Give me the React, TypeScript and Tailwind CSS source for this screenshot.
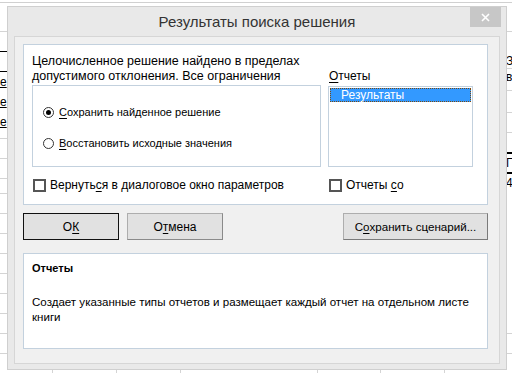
import React from "react";

const U = ({ children }: { children: React.ReactNode }) => (
  <span className="underline underline-offset-[2px] decoration-[1px]">{children}</span>
);

export default function App() {
  const leftLines = [31, 138, 158, 178, 193, 213, 233, 253, 273, 293, 313, 333, 353];
  const rightLines = [31, 68, 90, 112, 132, 333, 353];
  return (
    <div
      className="relative w-[512px] h-[373px] bg-white overflow-hidden text-[#000] whitespace-nowrap"
      style={{ fontFamily: '"Liberation Sans", Arial, sans-serif' }}
    >
      {/* spreadsheet behind */}
      <div className="absolute left-0 top-[2px] w-[512px] h-px bg-[#d0d0d0]" />
      {leftLines.map((y) => (
        <div key={"l" + y} className="absolute left-0 w-[8px] h-px bg-[#d4d4d4]" style={{ top: y }} />
      ))}
      <div className="absolute left-0 top-[51px] w-[8px] h-px bg-black" />
      <div className="absolute left-0 top-[71px] w-[8px] h-px bg-black" />
      <div className="absolute left-0 top-[75px] text-[12px] leading-[14px] underline">е</div>
      <div className="absolute left-0 top-[95px] text-[12px] leading-[14px] underline">е</div>
      <div className="absolute left-0 top-[115px] text-[12px] leading-[14px] underline">е</div>
      {rightLines.map((y) => (
        <div key={"r" + y} className="absolute left-[506px] w-[8px] h-px bg-[#d4d4d4]" style={{ top: y }} />
      ))}
      <div className="absolute left-[506px] top-[54px] text-[12px] leading-[14px]">З</div>
      <div className="absolute left-[506px] top-[70px] text-[12px] leading-[14px]">в</div>
      <div className="absolute left-[506px] top-[156px] text-[12px] leading-[14px]">Г</div>
      <div className="absolute left-[506px] top-[176px] text-[12px] leading-[14px]">4</div>
      <div className="absolute left-[506px] top-[172px] w-[8px] h-[2px] bg-black" />
      <div className="absolute left-[506px] top-[152px] w-[8px] h-[2px] bg-black" />
      {[52, 116, 180, 317, 380, 444].map((x) => (
        <div key={"v" + x} className="absolute top-[369px] w-px h-[5px] bg-[#d4d4d4]" style={{ left: x }} />
      ))}

      {/* dialog */}
      <div className="absolute left-[7px] top-[6px] w-[500px] h-[364px] border border-[#cfcfcf] bg-[#e9e9e9] flex flex-col">
        <div className="relative h-[29px] flex items-center justify-center text-[15px] text-[#333333] pt-[1px]">
          Результаты поиска решения
          <div className="absolute right-[5px] top-0 w-[31px] h-[20px] bg-[#c7c7c7] flex items-center justify-center">
            <svg width="9" height="9" viewBox="0 0 9 9">
              <path d="M1 1 L8 8 M8 1 L1 8" stroke="white" strokeWidth="1.6" />
            </svg>
          </div>
        </div>
        <div className="mx-[6px] mb-[5px] flex-1 border border-[#d6d6d6] bg-[#f0f0f0] pl-[8px] pt-[7px] flex flex-col text-[12px]">
          {/* top panel */}
          <div className="w-[465px] h-[161px] border border-[#c3d1de] bg-white pl-[8px] pt-[9px] flex flex-col">
            <div className="flex">
              <div className="w-[296px] flex flex-col">
                <div className="leading-[15px] text-[12.5px]">Целочисленное решение найдено в пределах</div>
                <div className="leading-[15px] text-[12.5px]">допустимого отклонения. Все ограничения</div>
                <div className="mt-px w-[289px] h-[82px] border border-[#c3d1de] bg-white flex flex-col pl-[10px] text-[11px]">
                  <div className="flex items-center h-[14px] mt-[19px]">
                    <div className="w-[11px] h-[11px] rounded-full border border-[#333] flex items-center justify-center">
                      <div className="w-[5px] h-[5px] rounded-full bg-black" />
                    </div>
                    <span className="ml-[5px] leading-[14px]">
                      <U>С</U>охранить найденное решение
                    </span>
                  </div>
                  <div className="flex items-center h-[14px] mt-[17px]">
                    <div className="w-[11px] h-[11px] rounded-full border border-[#333]" />
                    <span className="ml-[5px] leading-[14px]">
                      <U>В</U>осстановить исходные значения
                    </span>
                  </div>
                </div>
              </div>
              <div className="flex flex-col pt-[15px]">
                <div className="leading-[15px] pl-[1px]">
                  <U>О</U>тчеты
                </div>
                <div className="mt-[2px] w-[145px] h-[81px] border border-[#c3d1de] bg-white p-[1px]">
                  <div className="h-[14px] bg-[#3399ff] border border-dotted border-[#7a4a10] text-white leading-[12px] pl-[10px]">
                    Результаты
                  </div>
                </div>
              </div>
            </div>
            <div className="flex items-center mt-[11px] h-[14px]">
              <div className="w-[296px] flex items-center">
                <div className="ml-[1px] w-[13px] h-[13px] border-2 border-[#555555] shrink-0" />
                <span className="ml-[4px] leading-[14px]">
                  Вернуть<U>с</U>я в диалоговое окно параметров
                </span>
              </div>
              <div className="flex items-center">
                <div className="ml-[1px] w-[13px] h-[13px] border-2 border-[#555555] shrink-0" />
                <span className="ml-[4px] leading-[14px]">
                  Отчеты <U>с</U>о
                </span>
              </div>
            </div>
          </div>
          {/* buttons */}
          <div className="flex mt-[8px] w-[465px]">
            <button className="w-[96px] h-[27px] border border-[#111] bg-[#e1e1e1] flex items-center justify-center leading-[14px]">
              О<U>К</U>
            </button>
            <button className="ml-[8px] w-[96px] h-[27px] border border-[#adadad] border-r-[#8a8a8a] border-b-[#8a8a8a] bg-[#e1e1e1] flex items-center justify-center leading-[14px]">
              О<U>т</U>мена
            </button>
            <button className="ml-auto w-[145px] h-[27px] border border-[#adadad] border-r-[#7a7a7a] border-b-[#7a7a7a] bg-[#e1e1e1] flex items-center justify-center leading-[14px] text-[11.6px]">
              С<U>о</U>хранить сценарий...
            </button>
          </div>
          {/* description */}
          <div className="mt-[13px] w-[465px] h-[96px] border border-[#c3d1de] bg-white pl-[8px] pt-[7px] flex flex-col">
            <div className="font-bold leading-[15px] text-[11px]">Отчеты</div>
            <div className="mt-[19px] leading-[15px] text-[11.55px]">
              Создает указанные типы отчетов и размещает каждый отчет на отдельном листе
              <br />
              книги
            </div>
          </div>
        </div>
      </div>
    </div>
  );
}
